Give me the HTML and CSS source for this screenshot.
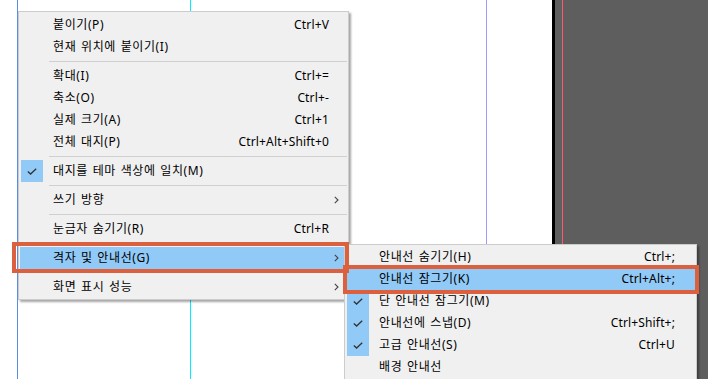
FILE: index.html
```html
<!DOCTYPE html>
<html lang="ko">
<head>
  <meta charset="UTF-8">
  <title>보기 메뉴</title>
  <link rel="stylesheet" href="styles.css">
</head>
<body>
  <div class="canvas">
    <div class="artboard">
      <span class="guide guide-blue"></span>
      <span class="guide guide-cyan"></span>
      <span class="guide guide-violet"></span>
    </div>
    <div class="artboard-edge"></div>
    <div class="pasteboard">
      <span class="guide guide-red"></span>
    </div>

    <div class="menu menu-main">
      <div class="item"><span class="check"></span><span class="label">붙이기(P)</span><span class="key">Ctrl+V</span><span class="tail"></span></div>
      <div class="item"><span class="check"></span><span class="label">현재 위치에 붙이기(I)</span><span class="key"></span><span class="tail"></span></div>
      <div class="sep"></div>
      <div class="item"><span class="check"></span><span class="label">확대(I)</span><span class="key">Ctrl+=</span><span class="tail"></span></div>
      <div class="item"><span class="check"></span><span class="label">축소(O)</span><span class="key">Ctrl+-</span><span class="tail"></span></div>
      <div class="item"><span class="check"></span><span class="label">실제 크기(A)</span><span class="key">Ctrl+1</span><span class="tail"></span></div>
      <div class="item"><span class="check"></span><span class="label">전체 대지(P)</span><span class="key">Ctrl+Alt+Shift+0</span><span class="tail"></span></div>
      <div class="sep"></div>
      <div class="item"><span class="check on"><svg viewBox="0 0 10 7"><polyline points="0.8,3.4 3.6,6 9.2,0.8"/></svg></span><span class="label">대지를 테마 색상에 일치(M)</span><span class="key"></span><span class="tail"></span></div>
      <div class="sep"></div>
      <div class="item"><span class="check"></span><span class="label">쓰기 방향</span><span class="key"></span><span class="tail"><svg class="arrow" viewBox="0 0 5 8"><polyline points="0.8,0.8 4,4 0.8,7.2"/></svg></span></div>
      <div class="sep"></div>
      <div class="item"><span class="check"></span><span class="label">눈금자 숨기기(R)</span><span class="key">Ctrl+R</span><span class="tail"></span></div>
      <div class="item active spaced"><span class="check"></span><span class="label">격자 및 안내선(G)</span><span class="key"></span><span class="tail"><svg class="arrow" viewBox="0 0 5 8"><polyline points="0.8,0.8 4,4 0.8,7.2"/></svg></span></div>
      <div class="item"><span class="check"></span><span class="label">화면 표시 성능</span><span class="key"></span><span class="tail"><svg class="arrow" viewBox="0 0 5 8"><polyline points="0.8,0.8 4,4 0.8,7.2"/></svg></span></div>
    </div>

    <div class="menu menu-sub">
      <div class="item"><span class="check"></span><span class="label">안내선 숨기기(H)</span><span class="key">Ctrl+;</span><span class="tail"></span></div>
      <div class="item active"><span class="check"></span><span class="label">안내선 잠그기(K)</span><span class="key">Ctrl+Alt+;</span><span class="tail"></span></div>
      <div class="item"><span class="check on"><svg viewBox="0 0 10 7"><polyline points="0.8,3.4 3.6,6 9.2,0.8"/></svg></span><span class="label">단 안내선 잠그기(M)</span><span class="key"></span><span class="tail"></span></div>
      <div class="item"><span class="check on"><svg viewBox="0 0 10 7"><polyline points="0.8,3.4 3.6,6 9.2,0.8"/></svg></span><span class="label">안내선에 스냅(D)</span><span class="key">Ctrl+Shift+;</span><span class="tail"></span></div>
      <div class="item"><span class="check on"><svg viewBox="0 0 10 7"><polyline points="0.8,3.4 3.6,6 9.2,0.8"/></svg></span><span class="label">고급 안내선(S)</span><span class="key">Ctrl+U</span><span class="tail"></span></div>
      <div class="item"><span class="check"></span><span class="label">배경 안내선</span><span class="key"></span><span class="tail"></span></div>
    </div>

    <div class="callout callout-main"></div>
    <div class="callout callout-sub"></div>
  </div>
</body>
</html>
```

FILE: styles.css
```css
body {
  margin: 0;
  font-family: "Noto Sans", "Noto Sans CJK KR", sans-serif;
  font-size: 12px;
  color: #000;
}
.canvas {
  position: relative;
  display: flex;
  width: 708px;
  height: 379px;
  overflow: hidden;
  background: #fff;
}
.artboard {
  position: relative;
  flex: 0 0 552px;
  background: #fff;
}
.artboard-edge {
  flex: 0 0 3px;
  background: #000;
}
.pasteboard {
  position: relative;
  flex: 1;
  background: #5e5e5e;
}

/* guides */
.guide {
  position: absolute;
  top: 0;
  bottom: 0;
  width: 1px;
}
.guide-blue {
  left: 17px;
  background: #5b8de6;
}
.guide-cyan {
  left: 190px;
  background: #00eeff;
}
.guide-violet {
  left: 486px;
  background: #9c9cff;
}
.guide-red {
  left: 7px;
  background: #ff5770;
}

/* menus */
.menu {
  position: absolute;
  box-sizing: border-box;
  background: #f0f0f0;
  border: 1px solid #cccccc;
  box-shadow: 2px 2px 2px rgba(0,0,0,0.35);
}
.menu-main {
  left: 18px;
  top: 11px;
  width: 331px;
  padding: 2px 1px 1px;
}
.menu-sub {
  left: 344px;
  top: 244px;
  width: 353px;
  padding: 1px 1px 2px;
}
.item {
  display: flex;
  align-items: center;
  height: 22px;
  line-height: 16px;
  white-space: nowrap;
}
.item.active {
  background: #91c9f7;
}
.item.spaced {
  margin: 7px 0;
}
.check {
  display: flex;
  align-items: center;
  justify-content: center;
  flex: 0 0 22px;
  height: 22px;
  margin-left: 1px;
}
.check.on {
  background: #91c9f7;
}
.check svg {
  width: 10px;
  height: 7px;
  fill: none;
  stroke: #333;
  stroke-width: 1.3;
}
.label {
  flex: 1;
  margin-left: 10px;
  letter-spacing: 0.6px;
  word-spacing: 1px;
}
.key {
  text-align: right;
  letter-spacing: 0.15px;
}
.tail {
  display: flex;
  align-items: center;
  flex: 0 0 18px;
  padding-left: 5px;
  box-sizing: border-box;
}
.menu-sub .tail {
  flex-basis: 20px;
}
.arrow {
  width: 5px;
  height: 8px;
  fill: none;
  stroke: #444;
  stroke-width: 1.1;
}
.sep {
  height: 7px;
  margin-left: 29px;
  position: relative;
}
.sep::after {
  content: "";
  position: absolute;
  left: 0;
  right: 0;
  top: 3px;
  height: 1px;
  background: #d0d0d0;
}

/* annotation boxes */
.callout {
  position: absolute;
  box-sizing: border-box;
  border: 4px solid #dc603e;
}
.callout-main {
  left: 12px;
  top: 242px;
  width: 337px;
  height: 31px;
}
.callout-sub {
  left: 343px;
  top: 265px;
  width: 356px;
  height: 29px;
}
```
